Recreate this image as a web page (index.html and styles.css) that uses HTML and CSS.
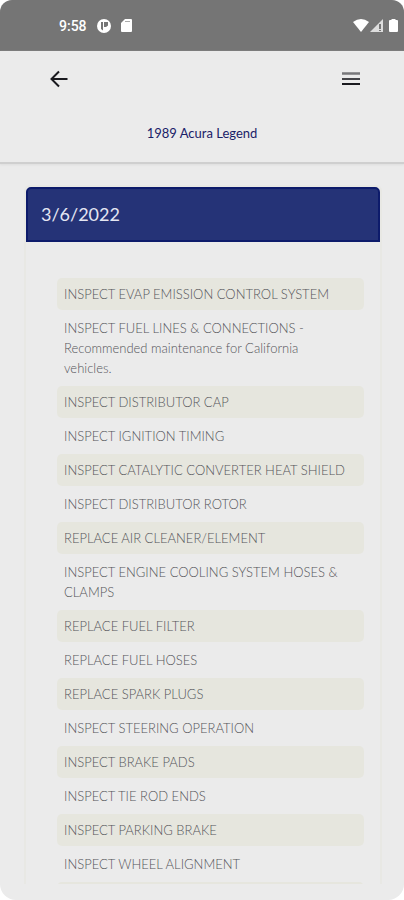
FILE: index.html
```html
<!DOCTYPE html>
<html lang="en">
<head>
    <meta charset="UTF-8">
    <meta name="viewport" content="width=device-width, initial-scale=1.0">
    <title>1989 Acura Legend</title>
    <link rel="stylesheet" href="styles.css">
</head>
<body>

<div class="screen">
    <div class="status-bar">
        <span class="clock">9:58</span>
        <svg width="14" height="14" viewBox="0 0 14 14">
            <circle cx="7" cy="7" r="7" fill="#fff"/>
            <path d="M4 3h2v8.500L4 10zM7 3h4v3.500L9 8H7z" fill="#757575"/>
        </svg>
        <svg width="11" height="13" viewBox="0 0 11 13">
            <path d="M4 0h6q1 0 1 1v11q0 1-1 1H1q-1 0-1-1V4z" fill="#fff"/>
            <path d="M4 2.500h5" stroke="#aaa"/>
        </svg>
        <div class="signals">
            <svg width="16" height="13" viewBox="0 0 16 13">
                <path d="M0 3Q8-3 16 3L8 13z" fill="#fff"/>
            </svg>
            <svg width="13" height="13" viewBox="0 0 13 13">
                <path d="M13 0v13H0z" fill="#ddd"/>
                <path d="M10 5v5M10 11v1" stroke="#757575" stroke-width="2"/>
            </svg>
            <svg class="battery" width="9" height="13" viewBox="0 0 9 13">
                <path d="M2.500 0h4v1H8q1 0 1 1v10q0 1-1 1H1q-1 0-1-1V2q0-1 1-1h1.500z" fill="#fff"/>
            </svg>
        </div>
    </div>

    <header class="header">
        <div class="toolbar">
            <button type="button" class="icon-btn" aria-label="Back">
                <svg width="18" height="18" viewBox="0 0 18 18" fill="none" stroke="#1a1a1f" stroke-width="2">
                    <path d="M17.500 9H2M9 1.500L1.500 9L9 16.500"/>
                </svg>
            </button>
            <button type="button" class="icon-btn" aria-label="Menu">
                <svg width="18" height="14" viewBox="0 0 18 14">
                    <path d="M0 1.500h18" stroke="#77777a" stroke-width="2.500"/>
                    <path d="M0 7h18" stroke="#444448" stroke-width="2"/>
                    <path d="M0 12h18" stroke="#1a1a1f" stroke-width="2"/>
                </svg>
            </button>
        </div>
        <h1>1989 Acura Legend</h1>
    </header>

    <main class="content">
        <section class="card">
            <h2>3/6/2022</h2>
            <ul class="services">
                <li>INSPECT EVAP EMISSION CONTROL SYSTEM</li>
                <li>INSPECT FUEL LINES &amp; CONNECTIONS -<br>Recommended maintenance for California<br>vehicles.</li>
                <li>INSPECT DISTRIBUTOR CAP</li>
                <li>INSPECT IGNITION TIMING</li>
                <li>INSPECT CATALYTIC CONVERTER HEAT SHIELD</li>
                <li>INSPECT DISTRIBUTOR ROTOR</li>
                <li>REPLACE AIR CLEANER/ELEMENT</li>
                <li>INSPECT ENGINE COOLING SYSTEM HOSES &amp; CLAMPS</li>
                <li>REPLACE FUEL FILTER</li>
                <li>REPLACE FUEL HOSES</li>
                <li>REPLACE SPARK PLUGS</li>
                <li>INSPECT STEERING OPERATION</li>
                <li>INSPECT BRAKE PADS</li>
                <li>INSPECT TIE ROD ENDS</li>
                <li>INSPECT PARKING BRAKE</li>
                <li>INSPECT WHEEL ALIGNMENT</li>
                <li></li>
            </ul>
        </section>
    </main>
</div>

</body>
</html>
```
FILE: styles.css
```css
* {
    box-sizing: border-box;
}
body {
    margin: 0;
    background-color: #fff;
    font-family: Lato, "Open Sans", sans-serif;
}
.screen {
    display: flex;
    flex-direction: column;
    height: 100vh;
    padding-bottom: 16px;
    border-radius: 12px 12px 16px 16px;
    background-color: #ebebeb;
    overflow: hidden;
}
.status-bar {
    display: flex;
    flex: none;
    align-items: center;
    gap: 10px;
    height: 51px;
    padding: 0 6px 0 59px;
    background-color: #757575;
}
.clock {
    color: #fff;
    font-family: Roboto, sans-serif;
    font-size: 14px;
    font-weight: 500;
}
.signals {
    display: flex;
    align-items: center;
    gap: 1px;
    margin-left: auto;
}
.battery {
    margin-left: 5px;
}
.header {
    flex: none;
    padding: 16px 0 19px;
    border-bottom: 2px solid #cfcfcf;
    box-shadow: 0 1px 2px #ddd;
}
.toolbar {
    display: flex;
    justify-content: space-between;
    padding: 0 36px 0 42px;
}
.icon-btn {
    display: flex;
    align-items: center;
    justify-content: center;
    width: 34px;
    height: 24px;
    padding: 0;
    border: 0;
    background: none;
    cursor: pointer;
}
h1 {
    margin: 32px 0 0;
    color: #1a2168;
    font-size: 13px;
    font-weight: 400;
    line-height: 20px;
    text-align: center;
}
.content {
    flex: 1;
    min-height: 0;
    padding: 21px 22px 0 24px;
    overflow: hidden;
}
.card {
    border: 2px solid #e8e8e4;
    border-radius: 6px;
}
h2 {
    margin: 0;
    padding: 0 13px;
    border: 2px solid #0d1b6b;
    border-radius: 5px 5px 0 0;
    background-color: #253377;
    color: #e4e6f2;
    font-size: 18px;
    font-weight: 400;
    line-height: 51px;
}
.services {
    display: flex;
    flex-direction: column;
    gap: 2px;
    margin: 0;
    padding: 36px 16px 36px 31px;
    list-style: none;
}
.services li {
    min-height: 32px;
    padding: 6px 7px;
    border-radius: 5px;
    color: #55555a;
    font-size: 13px;
    font-weight: 300;
    line-height: 20px;
}
.services li:nth-child(odd) {
    background-color: #e6e6de;
}
```
